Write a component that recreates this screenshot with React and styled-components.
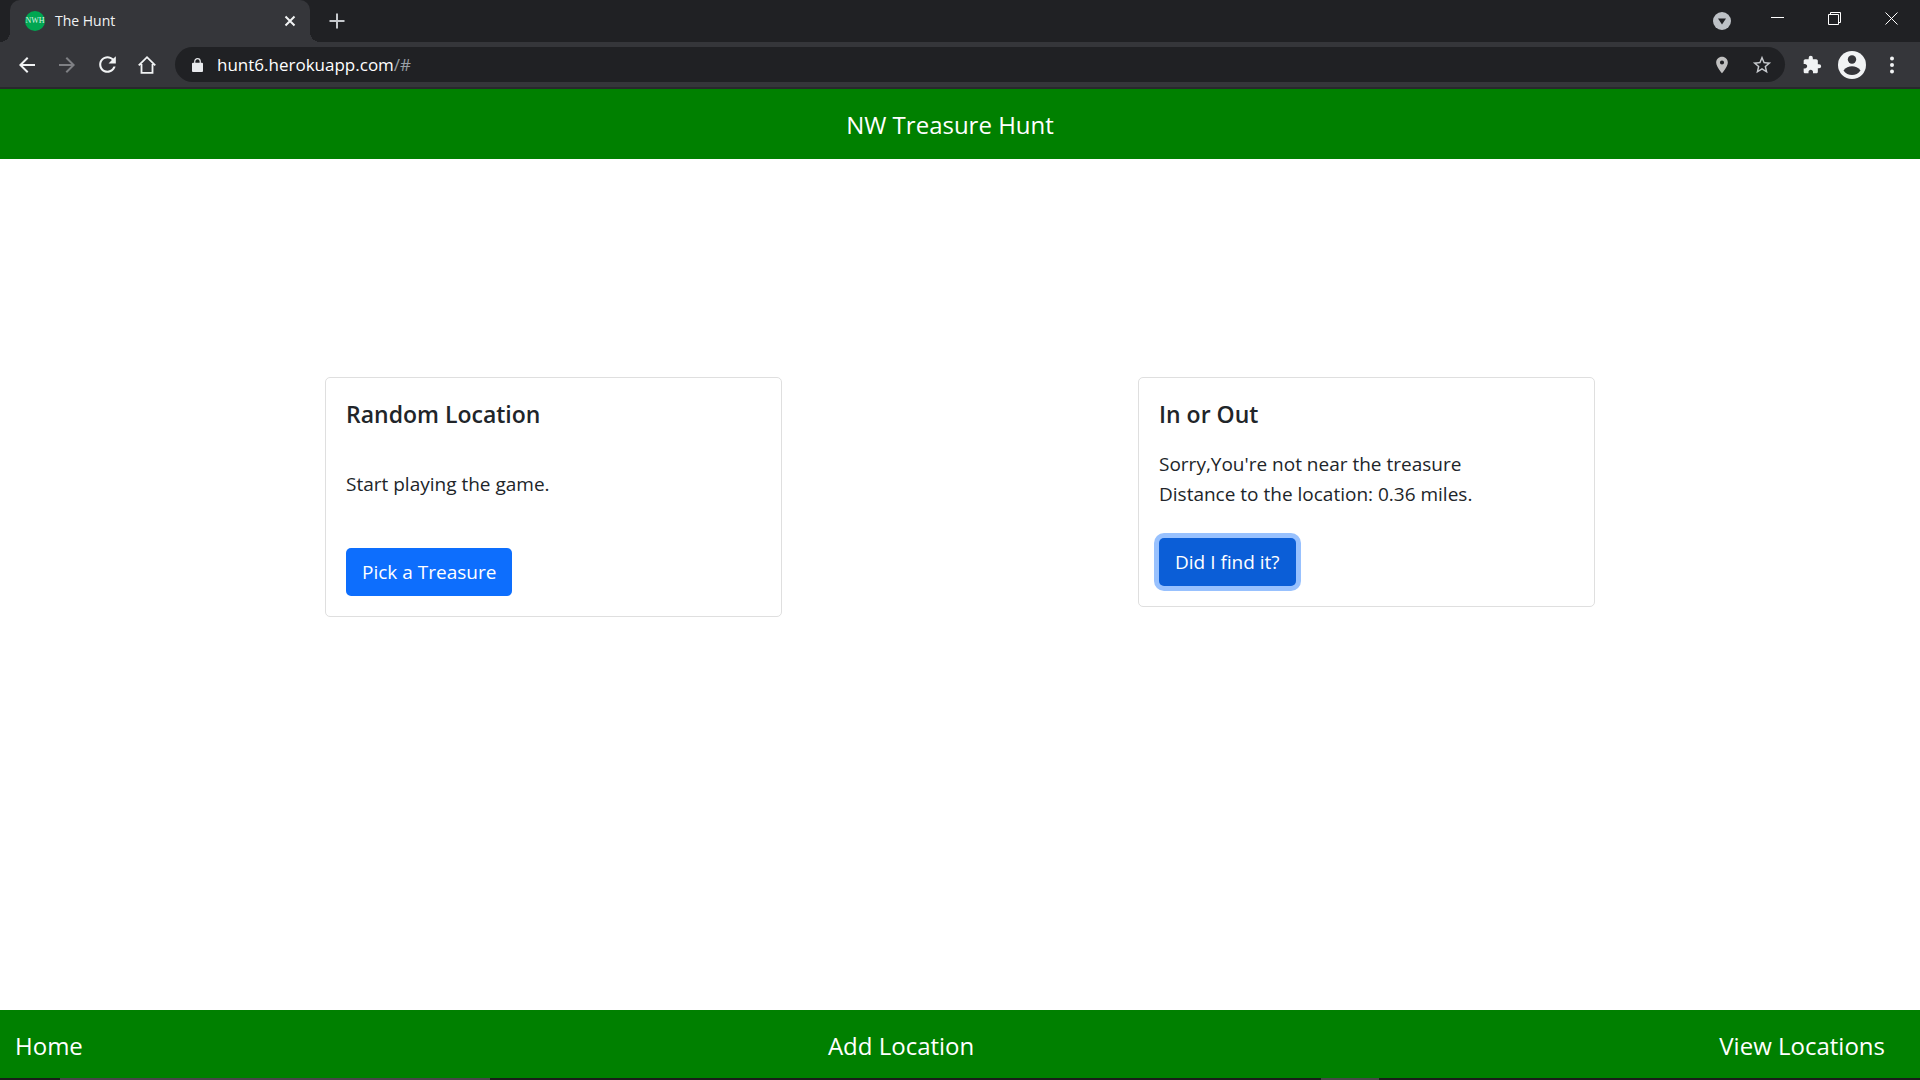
import React from "react";
import styled, { createGlobalStyle, css } from "styled-components";

const GlobalStyle = createGlobalStyle`
  *, *::before, *::after { box-sizing: border-box; }
  html, body, #root { height: 100%; }
  body {
    margin: 0;
    background: #fff;
    color: #212529;
    font-family: "Open Sans", "Noto Sans", sans-serif;
    font-size: 19px;
    line-height: 30px;
  }
  button, input { font: inherit; }
  h1, h2, p { margin: 0; }
  svg { display: block; }
`;

const Screen = styled.div`
  display: flex;
  flex-direction: column;
  min-height: 100%;
`;

const TabStrip = styled.div`
  display: flex;
  align-items: flex-end;
  height: 42px;
  padding-left: 10px;
  background: #202124;
`;

const Tab = styled.div`
  position: relative;
  display: flex;
  align-items: center;
  gap: 10px;
  width: 300px;
  height: 42px;
  padding: 0 10px 0 15px;
  border-radius: 10px 10px 0 0;
  background: #35363a;
  color: #f1f3f4;
  font-size: 14px;
  line-height: 20px;

  &::before, &::after {
    content: "";
    position: absolute;
    bottom: 0;
    width: 10px;
    height: 10px;
  }
  &::before {
    right: 100%;
    background: radial-gradient(circle at 0 0, transparent 10px, #35363a 10px);
  }
  &::after {
    left: 100%;
    background: radial-gradient(circle at 100% 0, transparent 10px, #35363a 10px);
  }
`;

const TabTitle = styled.span`
  flex: 1;
`;

const IconButton = styled.button`
  display: flex;
  align-items: center;
  justify-content: center;
  width: ${(p) => p.$w || 40}px;
  height: ${(p) => p.$h || 40}px;
  padding: 0;
  border: 0;
  background: none;
  color: ${(p) => p.$color || "#f1f3f4"};
`;

const StripSpacer = styled.div`
  flex: 1;
`;

const WindowControls = styled.div`
  display: flex;
  align-items: flex-start;
  height: 100%;
`;

const Toolbar = styled.div`
  display: flex;
  align-items: center;
  height: 47px;
  padding: 0 8px 0 7px;
  border-bottom: 2px solid #28292c;
  background: #35363a;
`;

const AddressBar = styled.form`
  display: flex;
  align-items: center;
  flex: 1;
  height: 35px;
  margin: 0 7px 0 8px;
  padding: 0 3px 0 17px;
  border-radius: 18px;
  background: #202124;
  font-size: 17px;
  line-height: 24px;
`;

const AddressField = styled.label`
  position: relative;
  display: flex;
  flex: 1;
  margin-left: 14px;
`;

const AddressInput = styled.input`
  width: 100%;
  padding: 0;
  border: 0;
  outline: 0;
  background: none;
  color: transparent;
  line-height: 24px;
`;

const AddressText = styled.span`
  position: absolute;
  inset: 0;
  color: #fff;
  pointer-events: none;
`;

const AddressPath = styled.span`
  color: #9aa0a6;
`;

const Header = styled.header`
  display: flex;
  align-items: center;
  justify-content: center;
  height: 70px;
  padding: 2px 20px 0 0;
  background: #008000;
`;

const Brand = styled.h1`
  color: #fff;
  font-size: 24px;
  font-weight: 400;
  line-height: 36px;
`;

const Main = styled.main`
  display: grid;
  flex: 1;
  grid-template-columns: 1fr 1fr;
  align-items: start;
  column-gap: 356px;
  padding: 218px 325px 40px;
`;

const Card = styled.section`
  padding: 20px;
  border: 1px solid #dfdfdf;
  border-radius: 5px;
  background: #fff;
`;

const CardTitle = styled.h2`
  font-size: 23px;
  font-weight: 600;
  line-height: 32px;
`;

const CardText = styled.p`
  margin: ${(p) => (p.$roomy ? "39px 0 49px" : "19px 0 29px")};
`;

const PrimaryButton = styled.button`
  height: 48px;
  padding: 0 16px;
  border: 0;
  border-radius: 5px;
  background: #0d6efd;
  color: #fff;
  ${(p) =>
    p.$active &&
    css`
      background: #0b5ed7;
      box-shadow: 0 0 0 5px #98c1fe;
    `}
`;

const FooterNav = styled.nav`
  display: flex;
  align-items: center;
  justify-content: space-between;
  height: 68px;
  padding: 4px 35px 0 15px;
  background: #008000;
`;

const FooterLink = styled.a`
  color: #fff;
  font-size: 24px;
  line-height: 36px;
  text-decoration: none;
`;

const Taskbar = styled.div`
  display: flex;
  height: 2px;
  padding-left: 60px;
  background: #1a1d1a;
`;

const TaskbarItem = styled.div`
  width: ${(p) => p.$w}px;
  margin-right: ${(p) => p.$gap}px;
  background: ${(p) => p.$color};
`;

const Glyph = ({ size = 20, box = 24, children, ...rest }) => (
  <svg width={size} height={size} viewBox={`0 0 ${box} ${box}`} fill="currentColor" aria-hidden="true" {...rest}>
    {children}
  </svg>
);

const Favicon = styled.span`
  display: flex;
  align-items: center;
  justify-content: center;
  width: 20px;
  height: 20px;
  border-radius: 50%;
  background: #00a651;
  color: #d5f2e1;
  font: 8px/20px "Liberation Serif", serif;
`;

export default function App() {
  return (
    <>
      <GlobalStyle />
      <Screen>
        <TabStrip>
          <Tab>
            <Favicon>NWH</Favicon>
            <TabTitle>The Hunt</TabTitle>
            <IconButton $w={20} $h={20} aria-label="Close tab">
              <Glyph size={12} box={12} stroke="currentColor" strokeWidth="2">
                <path d="M1.5 1.5 10.5 10.5M10.5 1.5 1.5 10.5" />
              </Glyph>
            </IconButton>
          </Tab>
          <IconButton $w={54} $h={42} $color="#c6c9cd" aria-label="New tab">
            <Glyph size={16} box={16} stroke="currentColor" strokeWidth="2">
              <path d="M8 .5V15.500M.5 8H15.500" />
            </Glyph>
          </IconButton>
          <StripSpacer />
          <WindowControls>
            <IconButton $w={54} $h={42} $color="#bdc1c6" aria-label="Search tabs">
              <Glyph size={18} box={18}>
                <circle cx="9" cy="9" r="9" />
                <path d="M5 6.500H13L9 12.500Z" fill="#202124" />
              </Glyph>
            </IconButton>
            <IconButton $w={57} $h={36} $color="#fff" aria-label="Minimize">
              <Glyph size={13} box={13}>
                <path d="M0 5h13v1H0z" />
              </Glyph>
            </IconButton>
            <IconButton $w={56} $h={36} $color="#fff" aria-label="Restore">
              <Glyph size={13} box={13} fill="none" stroke="currentColor">
                <path d="M.5 2.500H10.500V12.500H.5ZM2.500 2.500V.5H12.500V10.500H10.500" />
              </Glyph>
            </IconButton>
            <IconButton $w={58} $h={36} $color="#fff" aria-label="Close window">
              <Glyph size={13} box={13} stroke="currentColor">
                <path d="M.5 .5 12.500 12.500M12.500 .5 .5 12.500" />
              </Glyph>
            </IconButton>
          </WindowControls>
        </TabStrip>

        <Toolbar>
          <IconButton aria-label="Back">
            <Glyph size={24}>
              <path d="M20 11H7.830l5.590-5.590L12 4l-8 8 8 8 1.410-1.410L7.830 13H20v-2z" />
            </Glyph>
          </IconButton>
          <IconButton $color="#7f8084" aria-label="Forward">
            <Glyph size={24}>
              <path d="M12 4l-1.410 1.410L16.170 11H4v2h12.170l-5.580 5.590L12 20l8-8z" />
            </Glyph>
          </IconButton>
          <IconButton aria-label="Reload">
            <Glyph size={25}>
              <path d="M17.650 6.350C16.200 4.900 14.210 4 12 4c-4.420 0-7.990 3.580-7.990 8s3.570 8 7.990 8c3.730 0 6.840-2.550 7.730-6h-2.080c-.82 2.330-3.040 4-5.650 4-3.310 0-6-2.690-6-6s2.690-6 6-6c1.660 0 3.140.69 4.220 1.780L13 11h7V4l-2.350 2.350z" />
            </Glyph>
          </IconButton>
          <IconButton aria-label="Home page">
            <Glyph size={22} fill="none" stroke="currentColor" strokeWidth="2">
              <path d="M6 11V20.500H18V11M3 12.500 12 3.500 21 12.500" />
            </Glyph>
          </IconButton>
          <AddressBar>
            <Glyph size={11} height={14} viewBox="0 0 12 15" color="#e8eaed">
              <path d="M1.500 5H10.500A1.300 1.300 0 0 1 12 6.300V13.500A1.300 1.300 0 0 1 10.500 15H1.500A1.300 1.300 0 0 1 0 13.500V6.300A1.300 1.300 0 0 1 1.500 5Z" />
              <path d="M3 6V3.600a3 3 0 0 1 6 0V6" fill="none" stroke="currentColor" strokeWidth="1.300" />
            </Glyph>
            <AddressField>
              <AddressInput aria-label="Address" />
              <AddressText>
                hunt6.herokuapp.com<AddressPath>/#</AddressPath>
              </AddressText>
            </AddressField>
            <IconButton type="button" $h={34} $color="#c0c0c0" aria-label="Location access">
              <Glyph size={20}>
                <path d="M12 2C8.130 2 5 5.130 5 9c0 5.250 7 13 7 13s7-7.750 7-13c0-3.870-3.130-7-7-7zm0 9.500a2.500 2.500 0 1 1 0-5 2.500 2.500 0 0 1 0 5z" />
              </Glyph>
            </IconButton>
            <IconButton type="button" $h={34} $color="#c6c9cd" aria-label="Bookmark">
              <Glyph size={22}>
                <path d="M22 9.240l-7.190-.62L12 2 9.190 8.630 2 9.240l5.460 4.730L5.820 21 12 17.270 18.180 21l-1.630-7.030L22 9.240zM12 15.400l-3.760 2.270 1-4.280-3.320-2.880 4.380-.38L12 6.100l1.710 4.040 4.380.38-3.320 2.880 1 4.280L12 15.400z" />
              </Glyph>
            </IconButton>
          </AddressBar>
          <IconButton aria-label="Extensions">
            <Glyph size={20}>
              <path d="M20.500 11H19V7c0-1.100-.9-2-2-2h-4V3.500a2.500 2.500 0 0 0-5 0V5H4c-1.100 0-1.990.9-1.990 2v3.800H3.500c1.490 0 2.700 1.210 2.700 2.700s-1.210 2.700-2.700 2.700H2V20c0 1.100.9 2 2 2h3.800v-1.500c0-1.490 1.210-2.700 2.700-2.700s2.700 1.210 2.700 2.700V22H17c1.100 0 2-.9 2-2v-4h1.500a2.500 2.500 0 0 0 0-5z" />
            </Glyph>
          </IconButton>
          <IconButton aria-label="Profile">
            <Glyph size={28} box={28}>
              <circle cx="14" cy="14" r="14" />
              <circle cx="14" cy="8.500" r="4.200" fill="#35363a" />
              <path d="M5.500 19.500C7.500 16.500 11 15.300 14 15.300s6.500 1.200 8.500 4.200C20.500 22.600 17.300 24 14 24s-6.500-1.400-8.500-4.500z" fill="#35363a" />
            </Glyph>
          </IconButton>
          <IconButton aria-label="Browser menu">
            <Glyph size={18} box={18}>
              <circle cx="9" cy="2.500" r="2" />
              <circle cx="9" cy="9" r="2" />
              <circle cx="9" cy="15.500" r="2" />
            </Glyph>
          </IconButton>
        </Toolbar>

        <Header>
          <Brand>NW Treasure Hunt</Brand>
        </Header>

        <Main>
          <Card>
            <CardTitle>Random Location</CardTitle>
            <CardText $roomy>Start playing the game.</CardText>
            <PrimaryButton>Pick a Treasure</PrimaryButton>
          </Card>
          <Card>
            <CardTitle>In or Out</CardTitle>
            <CardText>
              Sorry,You're not near the treasure
              <br />
              Distance to the location: 0.36 miles.
            </CardText>
            <PrimaryButton $active>Did I find it?</PrimaryButton>
          </Card>
        </Main>

        <FooterNav>
          <FooterLink href="#">Home</FooterLink>
          <FooterLink href="#">Add Location</FooterLink>
          <FooterLink href="#">View Locations</FooterLink>
        </FooterNav>
        <Taskbar>
          <TaskbarItem $w={430} $gap={831} $color="#4a444a" />
          <TaskbarItem $w={58} $gap={0} $color="#484848" />
        </Taskbar>
      </Screen>
    </>
  );
}
